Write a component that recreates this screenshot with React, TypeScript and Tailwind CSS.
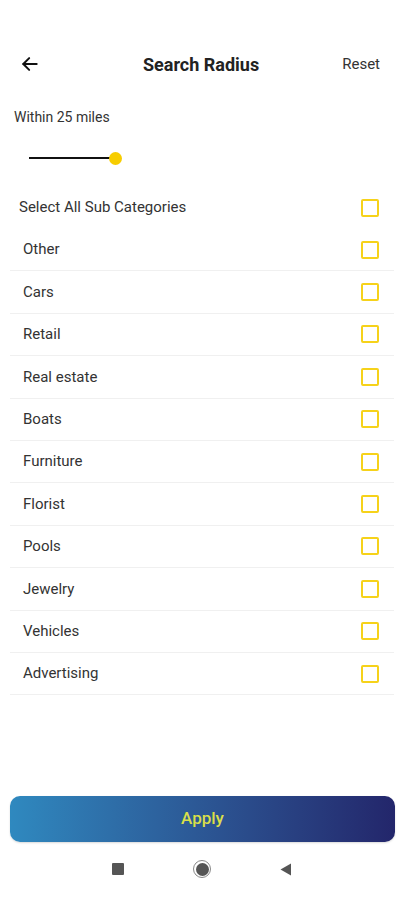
import React, { useState } from 'react';

const categories = [
  'Other',
  'Cars',
  'Retail',
  'Real estate',
  'Boats',
  'Furniture',
  'Florist',
  'Pools',
  'Jewelry',
  'Vehicles',
  'Advertising',
];

const Box = ({ checked, onClick }: { checked: boolean; onClick: () => void }) => (
  <button
    onClick={onClick}
    className="w-[18px] h-[18px] border-2 border-[#f6d21a] rounded-[2px] flex items-center justify-center bg-white"
  >
    {checked && <span className="w-[8px] h-[8px] bg-[#f6d21a]" />}
  </button>
);

const App: React.FC = () => {
  const [selected, setSelected] = useState<string[]>([]);
  const allOn = selected.length === categories.length;

  const toggle = (name: string) => {
    setSelected((s) => (s.includes(name) ? s.filter((x) => x !== name) : [...s, name]));
  };

  return (
    <div
      className="w-[404px] h-[900px] bg-white flex flex-col text-[#222]"
      style={{ fontFamily: 'Roboto, "Noto Sans", Arial, sans-serif' }}
    >
      {/* header */}
      <div className="mt-[44px] h-[40px] flex items-center justify-between pl-[20px] pr-[24px]">
        <svg width="20" height="20" viewBox="0 0 24 24" fill="none" stroke="#111" strokeWidth="2.4" strokeLinecap="round" strokeLinejoin="round">
          <path d="M20 12H4" />
          <path d="M11 5l-7 7 7 7" />
        </svg>
        <h1 className="text-[18px] font-bold text-[#222] ml-[20px]">Search Radius</h1>
        <button className="text-[15px] text-[#333]">Reset</button>
      </div>

      <p className="mt-[23px] ml-[14px] text-[14px] leading-[20px] text-[#333]">Within 25 miles</p>

      {/* slider */}
      <div className="mt-[24px] ml-[29px] h-[14px] flex items-center">
        <div className="w-[86px] h-[2px] bg-[#111]" />
        <div className="w-[13px] h-[13px] rounded-full bg-[#f7cd00] -ml-[6px]" />
      </div>

      {/* select all */}
      <div className="mt-[21px] h-[43px] flex items-center justify-between pl-[19px] pr-[25px]">
        <span className="text-[15px] text-[#333]">Select All Sub Categories</span>
        <Box
          checked={allOn}
          onClick={() => setSelected(allOn ? [] : [...categories])}
        />
      </div>

      <div className="mx-[10px]">
        {categories.map((c) => (
          <div
            key={c}
            className="h-[42.4px] flex items-center justify-between pl-[13px] pr-[15px] border-b border-[#f0f0f0]"
          >
            <span className="text-[15px] text-[#333]">{c}</span>
            <Box checked={selected.includes(c)} onClick={() => toggle(c)} />
          </div>
        ))}
      </div>

      {/* apply */}
      <div className="mt-auto px-[10px] pr-[9px]">
        <button className="w-full h-[46px] rounded-[10px] bg-gradient-to-r from-[#2f89bf] to-[#23266b] text-[#d9df4a] text-[17px] font-medium shadow-[0_1px_2px_rgba(0,0,0,0.15)]">
          Apply
        </button>
      </div>

      {/* android nav */}
      <div className="h-[58px] flex items-center justify-center gap-[69px] pb-[4px]">
        <div className="w-[12px] h-[12px] bg-[#555] rounded-[1px]" />
        <div className="w-[18px] h-[18px] rounded-full border border-[#888] flex items-center justify-center">
          <div className="w-[13px] h-[13px] rounded-full bg-[#555]" />
        </div>
        <svg width="12" height="13" viewBox="0 0 12 13">
          <path d="M11 0.5v12L0.5 6.5z" fill="#555" />
        </svg>
      </div>
    </div>
  );
};

export default App;
